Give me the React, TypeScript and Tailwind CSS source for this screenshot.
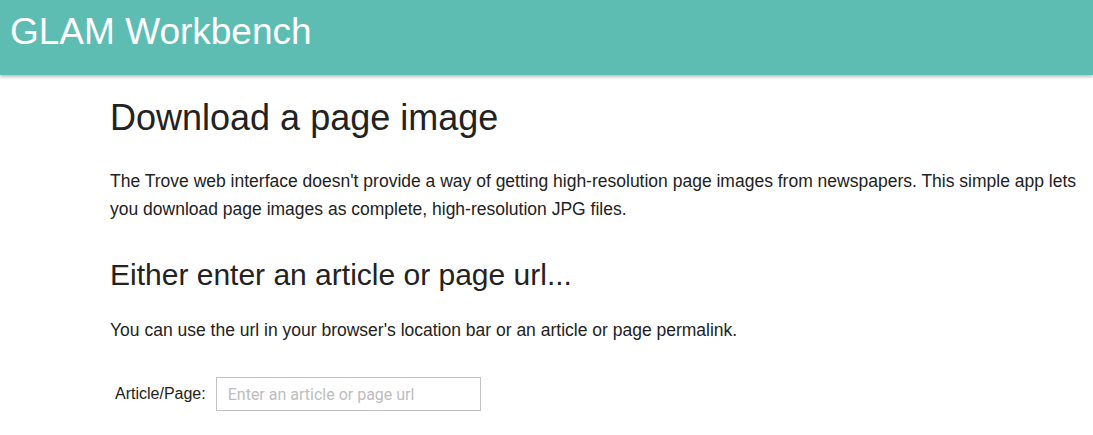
import React from "react";

const App: React.FC = () => {
  return (
    <div className="min-h-screen bg-white font-['Liberation_Sans',Arial,sans-serif] text-[#222]">
      {/* Header bar */}
      <header className="h-[75px] bg-[#5ebdb2] shadow-[0_2px_3px_rgba(0,0,0,0.25)] flex items-start px-[10px] pt-[9px]">
        <h1 className="text-[37px] leading-[46px] text-white">GLAM Workbench</h1>
      </header>

      <main className="pl-[110px] pr-[10px]">
        <h2 className="mt-[20px] text-[36px] leading-[46px]">Download a page image</h2>
        <p className="mt-[26px] text-[17.5px] leading-[28px]">
          The Trove web interface doesn't provide a way of getting high-resolution page images from newspapers. This
          simple app lets you download page images as complete, high-resolution JPG files.
        </p>

        <h3 className="mt-[32px] text-[30px] leading-[40px]">Either enter an article or page url...</h3>
        <p className="mt-[21px] text-[17.5px] leading-[28px]">
          You can use the url in your browser's location bar or an article or page permalink.
        </p>

        <div className="mt-[33px] flex items-center gap-[10px] pl-[5px]">
          <label className="text-[16px]">Article/Page:</label>
          <input
            type="text"
            placeholder="Enter an article or page url"
            className="w-[265px] h-[34px] border border-[#c2c2c2] px-[11px] font-['Roboto',sans-serif] text-[16px] placeholder:text-[#bdbdbd] outline-none"
          />
        </div>
      </main>
    </div>
  );
};

export default App;
